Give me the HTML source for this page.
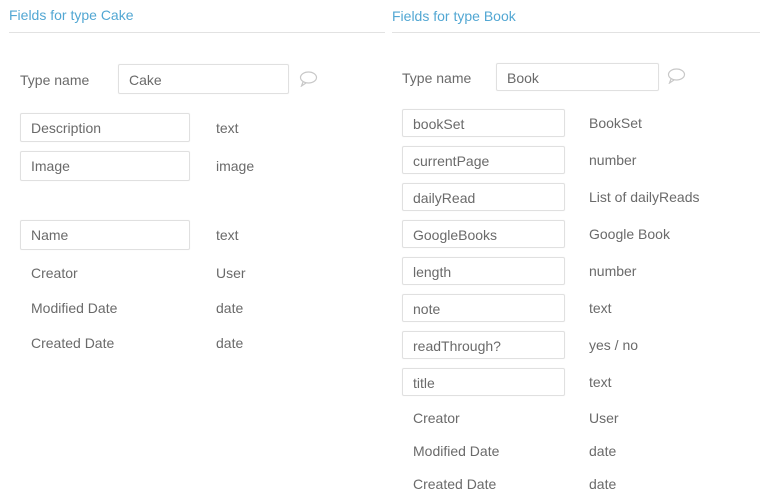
<!DOCTYPE html>
<html><head><style>
body{margin:0;width:760px;height:500px;background:#fff;font-family:"Liberation Sans",sans-serif;color:#6a6a6a;font-size:14px;position:relative;overflow:hidden}
div{position:absolute}
.t{color:#52a7d3;font-size:14px}
.ln{height:1px;background:#e2e2e2}
.b{border:1px solid #e0e0e0;box-sizing:border-box;border-radius:2px;padding-left:10px;line-height:28px;box-shadow:0 0 1px #eee}
.l{line-height:16px}
</style></head><body>
<div class="t" style="left:9px;top:7px">Fields for type Cake</div>
<div class="ln" style="left:9px;top:32px;width:376px"></div>
<div class="t" style="left:392px;top:8px">Fields for type Book</div>
<div class="ln" style="left:392px;top:32px;width:368px"></div>

<div class="l" style="left:20px;top:72px">Type name</div>
<div class="b" style="left:118px;top:64px;width:171px;height:30px;line-height:30px">Cake</div>
<svg style="position:absolute;left:299px;top:71px" width="20" height="16"><ellipse cx="9.5" cy="6.5" rx="8" ry="5.5" fill="none" stroke="#c8c8c8" stroke-width="1.2"/><path d="M4 11 L2.5 15 L7 12" fill="none" stroke="#c8c8c8" stroke-width="1.2"/></svg>
<div class="b" style="left:20px;top:113px;width:170px;height:29px">Description</div><div class="l" style="left:216px;top:120px">text</div>
<div class="b" style="left:20px;top:151px;width:170px;height:30px">Image</div><div class="l" style="left:216px;top:158px">image</div>
<div class="b" style="left:20px;top:220px;width:170px;height:30px">Name</div><div class="l" style="left:216px;top:227px">text</div>
<div class="l" style="left:31px;top:265px">Creator</div><div class="l" style="left:216px;top:265px">User</div>
<div class="l" style="left:31px;top:300px">Modified Date</div><div class="l" style="left:216px;top:300px">date</div>
<div class="l" style="left:31px;top:335px">Created Date</div><div class="l" style="left:216px;top:335px">date</div>

<div class="l" style="left:402px;top:70px">Type name</div>
<div class="b" style="left:496px;top:63px;width:163px;height:28px">Book</div>
<svg style="position:absolute;left:667px;top:68px" width="20" height="16"><ellipse cx="9.5" cy="6.5" rx="8" ry="5.5" fill="none" stroke="#c8c8c8" stroke-width="1.2"/><path d="M4 11 L2.5 15 L7 12" fill="none" stroke="#c8c8c8" stroke-width="1.2"/></svg>

<div class="b" style="left:402px;top:109px;width:163px;height:28px">bookSet</div><div class="l" style="left:589px;top:115px">BookSet</div>
<div class="b" style="left:402px;top:146px;width:163px;height:28px">currentPage</div><div class="l" style="left:589px;top:152px">number</div>
<div class="b" style="left:402px;top:183px;width:163px;height:28px">dailyRead</div><div class="l" style="left:589px;top:189px">List of dailyReads</div>
<div class="b" style="left:402px;top:220px;width:163px;height:28px">GoogleBooks</div><div class="l" style="left:589px;top:226px">Google Book</div>
<div class="b" style="left:402px;top:257px;width:163px;height:28px">length</div><div class="l" style="left:589px;top:263px">number</div>
<div class="b" style="left:402px;top:294px;width:163px;height:28px">note</div><div class="l" style="left:589px;top:300px">text</div>
<div class="b" style="left:402px;top:331px;width:163px;height:28px">readThrough?</div><div class="l" style="left:589px;top:337px">yes / no</div>
<div class="b" style="left:402px;top:368px;width:163px;height:28px">title</div><div class="l" style="left:589px;top:374px">text</div>
<div class="l" style="left:413px;top:410px">Creator</div><div class="l" style="left:589px;top:410px">User</div>
<div class="l" style="left:413px;top:443px">Modified Date</div><div class="l" style="left:589px;top:443px">date</div>
<div class="l" style="left:413px;top:476px">Created Date</div><div class="l" style="left:589px;top:476px">date</div>
</body></html>
